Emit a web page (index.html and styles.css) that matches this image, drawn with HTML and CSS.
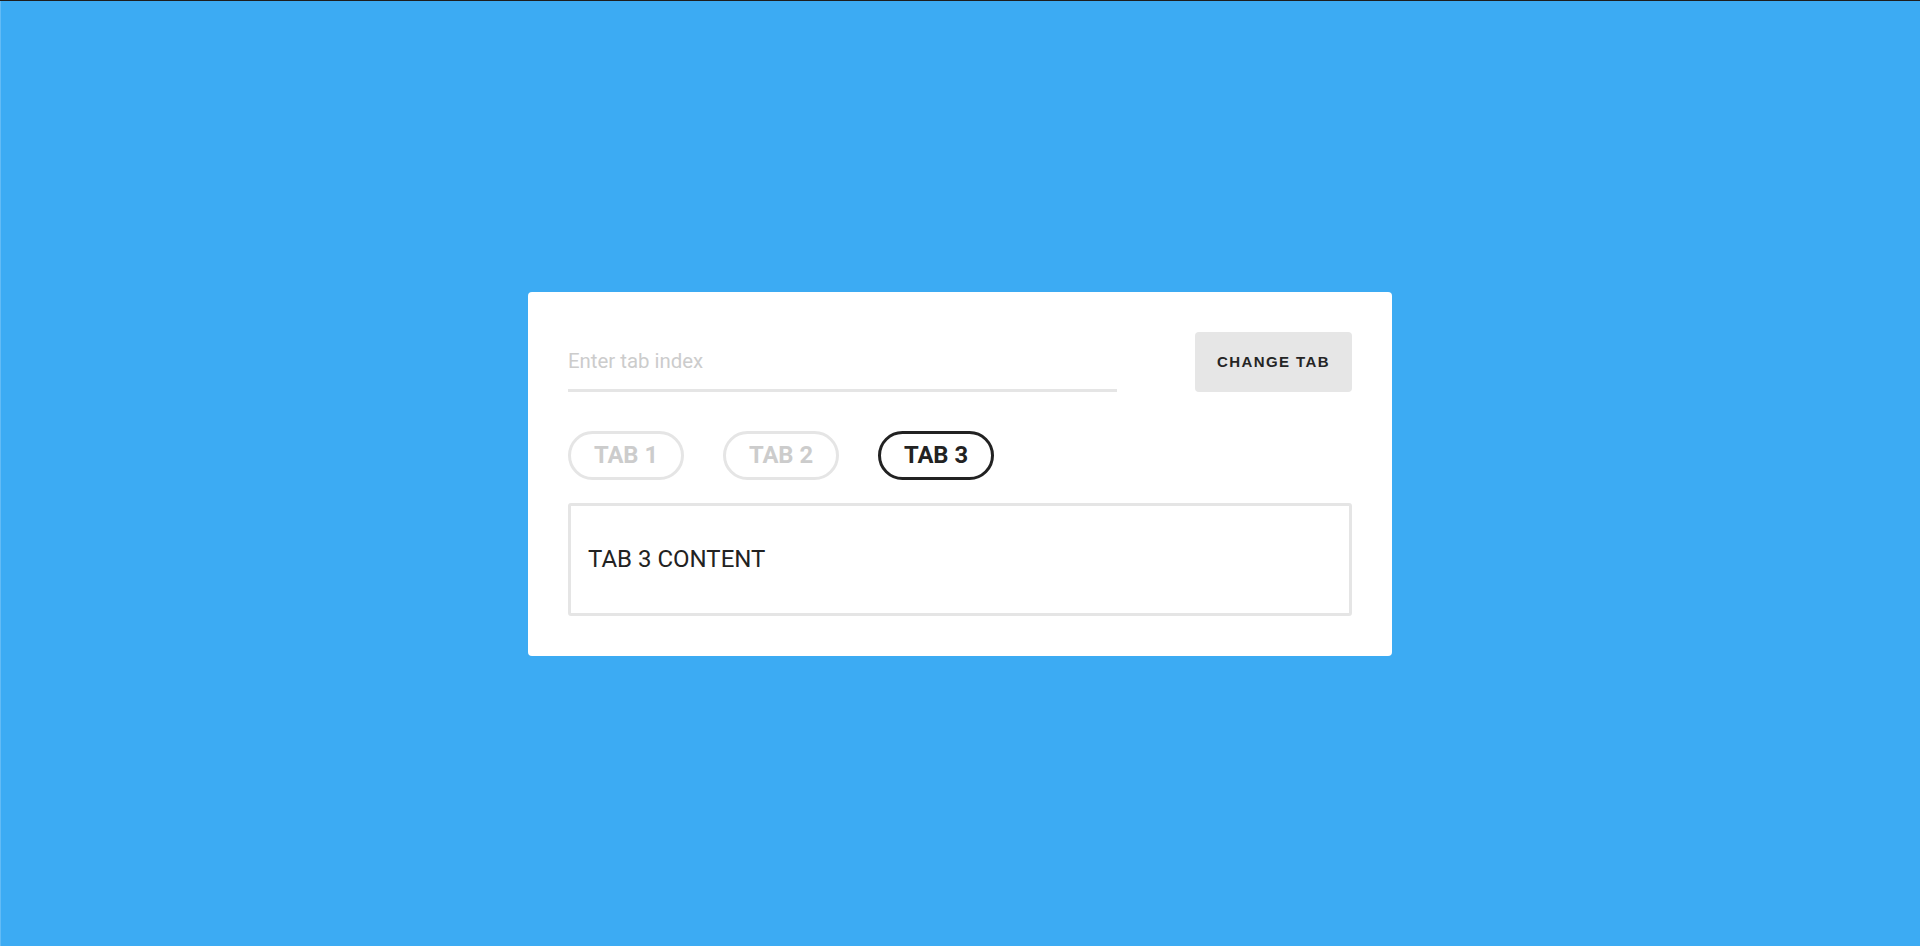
FILE: index.html
```html
<!DOCTYPE html>
<html lang="en">
<head>
<meta charset="utf-8">
<title>Tabs</title>
<link rel="stylesheet" href="styles.css">
</head>
<body>
<div class="page">
  <div class="card">
    <div class="controls">
      <input class="tab-input" type="text" placeholder="Enter tab index">
      <button class="change-btn" type="button">CHANGE TAB</button>
    </div>
    <div class="tabs">
      <button class="tab" type="button">TAB 1</button>
      <button class="tab" type="button">TAB 2</button>
      <button class="tab tab-active" type="button">TAB 3</button>
    </div>
    <div class="content">TAB 3 CONTENT</div>
  </div>
</div>
</body>
</html>
```
FILE: styles.css
```css
html, body {
  margin: 0;
  padding: 0;
  height: 100%;
}
body {
  background: #3cabf3;
  font-family: Roboto, "Liberation Sans", sans-serif;
  border-top: 1px solid #1e1e1e;
  box-sizing: border-box;
  box-shadow: inset 1px 0 0 #63bbf5;
}
.page {
  height: 100%;
  display: flex;
  align-items: center;
  justify-content: center;
}
.card {
  width: 864px;
  box-sizing: border-box;
  background: #fff;
  border-radius: 4px;
  padding: 40px;
  display: flex;
  flex-direction: column;
}
.controls {
  display: flex;
  justify-content: space-between;
  align-items: flex-start;
  height: 60px;
}
.tab-input {
  width: 549px;
  height: 60px;
  box-sizing: border-box;
  border: none;
  border-bottom: 3px solid #e5e5e5;
  padding: 2px 0 0 0;
  margin: 0;
  font-family: Roboto, sans-serif;
  font-size: 20.4px;
  color: #222;
  outline: none;
  background: transparent;
}
.tab-input::placeholder {
  color: #cccccc;
}
.change-btn {
  width: 157px;
  height: 60px;
  border: none;
  border-radius: 4px;
  background: #e6e6e6;
  color: #252525;
  font-family: "Liberation Sans", Arial, sans-serif;
  font-weight: bold;
  font-size: 15px;
  letter-spacing: 1.4px;
  padding: 0;
  margin: 0;
}
.tabs {
  display: flex;
  gap: 39px;
  margin-top: 39px;
}
.tab {
  height: 49px;
  box-sizing: border-box;
  padding: 0 20px;
  min-width: 116px;
  border: 3px solid #e5e5e5;
  border-radius: 25px;
  background: #fff;
  color: #cccccc;
  font-family: Roboto, sans-serif;
  font-weight: bold;
  font-size: 23.8px;
  margin: 0;
}
.tab-active {
  border-color: #222;
  color: #222;
}
.content {
  margin-top: 23px;
  height: 113px;
  box-sizing: border-box;
  border: 3px solid #e5e5e5;
  border-radius: 3px;
  padding: 0 17px;
  display: flex;
  align-items: center;
  font-size: 24px;
  color: #222;
}
```
